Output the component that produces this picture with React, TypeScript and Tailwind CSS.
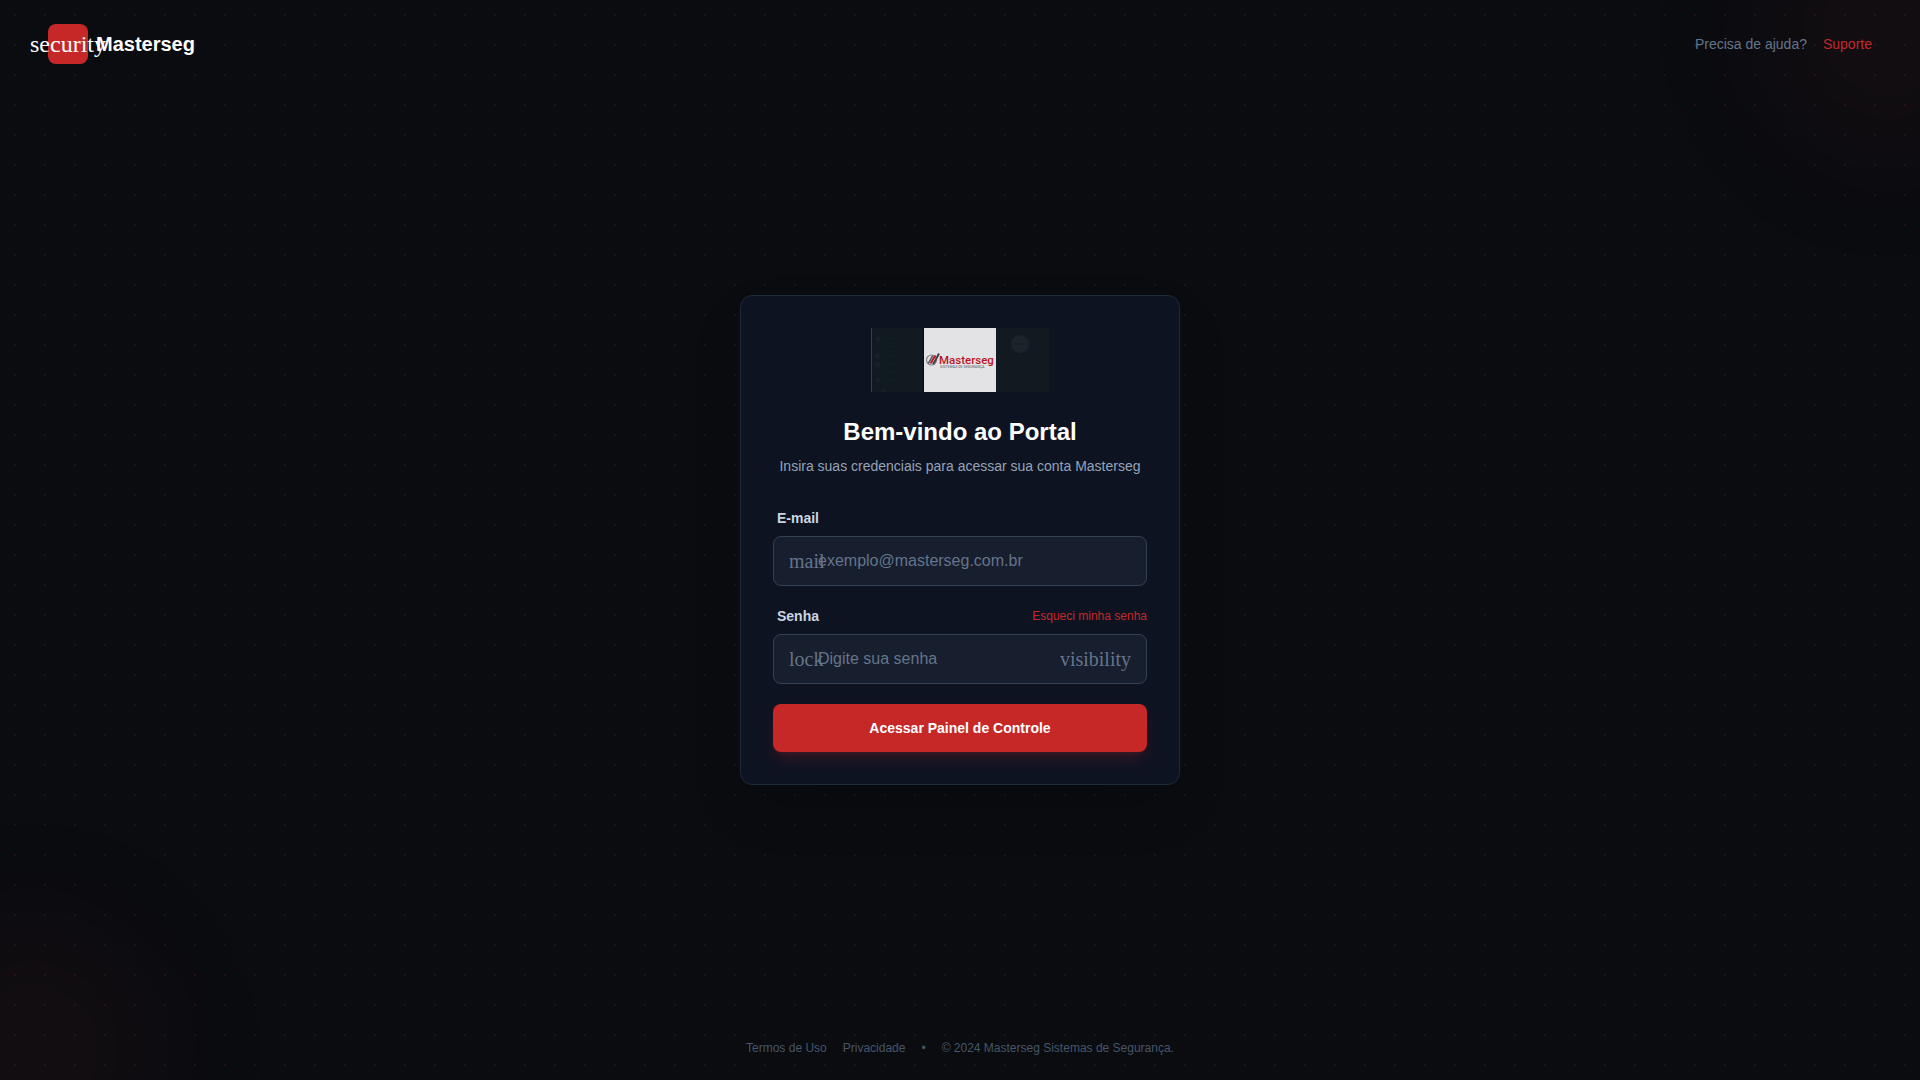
import { useState } from 'react'
import type { ReactNode } from 'react'

const SERIF = "font-['Liberation_Serif',serif]"

function GlyphName({ children, className = '' }: { children: ReactNode; className?: string }) {
  return (
    <span aria-hidden="true" className={`${SERIF} leading-none whitespace-nowrap ${className}`}>
      {children}
    </span>
  )
}

function BrandImage() {
  return (
    <svg viewBox="0 0 178 64" className="h-16 w-auto" role="img" aria-label="Masterseg Sistemas de Segurança">
      <rect width="178" height="64" fill="#111a21" />
      <rect width="1" height="64" fill="#3a4046" />
      <rect x="52" width="1" height="64" fill="#070b10" />

      {/* Left panel */}
      <g fill="#172127">
        <circle cx="7" cy="11" r="2.6" />
        <circle cx="6.5" cy="28" r="2.4" />
        <circle cx="6.5" cy="36.5" r="2.8" />
        <circle cx="7" cy="52" r="2.2" />
        <rect x="10" y="61" width="5" height="3" rx="1" />
      </g>
      <g fill="#131d24">
        <rect x="12" y="10" width="14" height="1" />
        <rect x="11" y="18" width="18" height="1" />
        <rect x="11" y="27" width="15" height="1" />
        <rect x="11" y="36" width="16" height="1" />
        <rect x="16" y="44" width="14" height="1" />
        <rect x="11" y="52" width="16" height="1" />
      </g>

      {/* Logo on white */}
      <rect x="53" width="72" height="64" fill="#e3e3e5" />
      <g fill="none">
        <circle cx="60.5" cy="32" r="5" stroke="#85868a" strokeWidth="1.2" />
        <path d="M57 35.5 C59 33.5 60 30 62 27.5" stroke="#5b5c60" strokeWidth="1.6" />
        <path d="M59.5 35.5 C61.500 33 62.500 30 64.500 27.500" stroke="#b3141a" strokeWidth="1.8" />
        <path d="M62 36 C64.500 33 66 29 68 25.500" stroke="#3f4044" strokeWidth="2" />
      </g>
      <text x="68" y="36" fontSize="11.5" fontWeight="500" fill="#b8161c" fontFamily="Roboto, sans-serif">
        Masterseg
      </text>
      <text x="69" y="39.5" fontSize="3.6" fontWeight="500" fill="#77787b" fontFamily="Roboto, sans-serif">
        SISTEMAS DE SEGURANÇA
      </text>

      {/* Right panel */}
      <circle cx="149" cy="16" r="9" fill="#1b232b" />
      <rect x="142" y="15" width="14" height="2" fill="#161e26" />
    </svg>
  )
}

const inputClass =
  'block w-full rounded-lg border border-[#334155] bg-[#171e2d] py-3 pl-11 text-base leading-6 text-slate-100 placeholder:text-[#64748b] placeholder:opacity-100 focus:border-[#c62828] focus:outline-none'

export default function App() {
  const [showPassword, setShowPassword] = useState(false)

  return (
    <div className="relative isolate grid min-h-screen grid-rows-[1fr_auto_1fr] overflow-hidden bg-[#0a0c10] bg-[radial-gradient(circle_at_center,rgba(198,40,40,0.15)_1px,transparent_1px)] bg-[size:30px_30px] font-['Liberation_Sans',Arial,sans-serif]">
      {/* Glows */}
      <div className="absolute -top-24 -right-24 -z-10 size-64 rounded-full bg-[#c62828]/5 blur-3xl" />
      <div className="absolute -bottom-24 -left-24 -z-10 size-64 rounded-full bg-[#c62828]/5 blur-3xl" />

      <header className="flex items-center justify-between self-start px-12 py-6">
        <div className="flex items-center gap-2">
          <div className="flex size-10 items-center justify-center rounded-lg bg-[#c62828]">
            <GlyphName className="text-2xl text-white">security</GlyphName>
          </div>
          <span className="text-xl font-bold text-white">Masterseg</span>
        </div>
        <div className="flex items-center gap-4 text-sm">
          <span className="text-[#64748b]">Precisa de ajuda?</span>
          <a href="#suporte" className="text-[#c62828] hover:underline">
            Suporte
          </a>
        </div>
      </header>

      <main className="flex justify-center px-4">
        <div className="w-full max-w-[440px] rounded-xl border border-[#1e293b] bg-[#0e1322] p-8 shadow-2xl">
          <div className="mb-8 flex flex-col items-center text-center">
            <BrandImage />
            <h1 className="mt-6 text-2xl font-bold text-white">Bem-vindo ao Portal</h1>
            <p className="mt-2 text-sm text-[#94a3b8]">Insira suas credenciais para acessar sua conta Masterseg</p>
          </div>

          <form className="flex flex-col gap-5" onSubmit={(e) => e.preventDefault()}>
            <div className="flex flex-col gap-2">
              <label htmlFor="email" className="ml-1 text-sm font-semibold text-[#cbd5e1]">
                E-mail
              </label>
              <div className="relative">
                <input id="email" type="email" placeholder="exemplo@masterseg.com.br" className={`${inputClass} pr-4`} />
                <div className="pointer-events-none absolute inset-y-0 left-4 flex items-center">
                  <GlyphName className="text-xl text-[#64748b]">mail</GlyphName>
                </div>
              </div>
            </div>

            <div className="flex flex-col gap-2">
              <div className="flex items-center justify-between">
                <label htmlFor="password" className="ml-1 text-sm font-semibold text-[#cbd5e1]">
                  Senha
                </label>
                <a href="#recuperar" className="text-xs text-[#c62828] hover:underline">
                  Esqueci minha senha
                </a>
              </div>
              <div className="relative">
                <input
                  id="password"
                  type={showPassword ? 'text' : 'password'}
                  placeholder="Digite sua senha"
                  className={`${inputClass} pr-24`}
                />
                <div className="pointer-events-none absolute inset-y-0 left-4 flex items-center">
                  <GlyphName className="text-xl text-[#64748b]">lock</GlyphName>
                </div>
                <button
                  type="button"
                  aria-label="Mostrar senha"
                  aria-pressed={showPassword}
                  onClick={() => setShowPassword(!showPassword)}
                  className="absolute inset-y-0 right-4 flex items-center text-[#64748b] hover:text-slate-300"
                >
                  <GlyphName className="text-xl">visibility</GlyphName>
                </button>
              </div>
            </div>

            <button
              type="submit"
              className="w-full rounded-lg bg-[#c62828] py-3.5 text-sm font-bold text-white shadow-lg shadow-[#c62828]/20 transition-colors hover:bg-[#b02323]"
            >
              Acessar Painel de Controle
            </button>
          </form>
        </div>
      </main>

      <footer className="flex items-center justify-center gap-4 self-end p-6 text-xs text-[#475569]">
        <a href="#termos" className="hover:text-slate-400">
          Termos de Uso
        </a>
        <a href="#privacidade" className="hover:text-slate-400">
          Privacidade
        </a>
        <span>•</span>
        <span>© 2024 Masterseg Sistemas de Segurança.</span>
      </footer>
    </div>
  )
}
